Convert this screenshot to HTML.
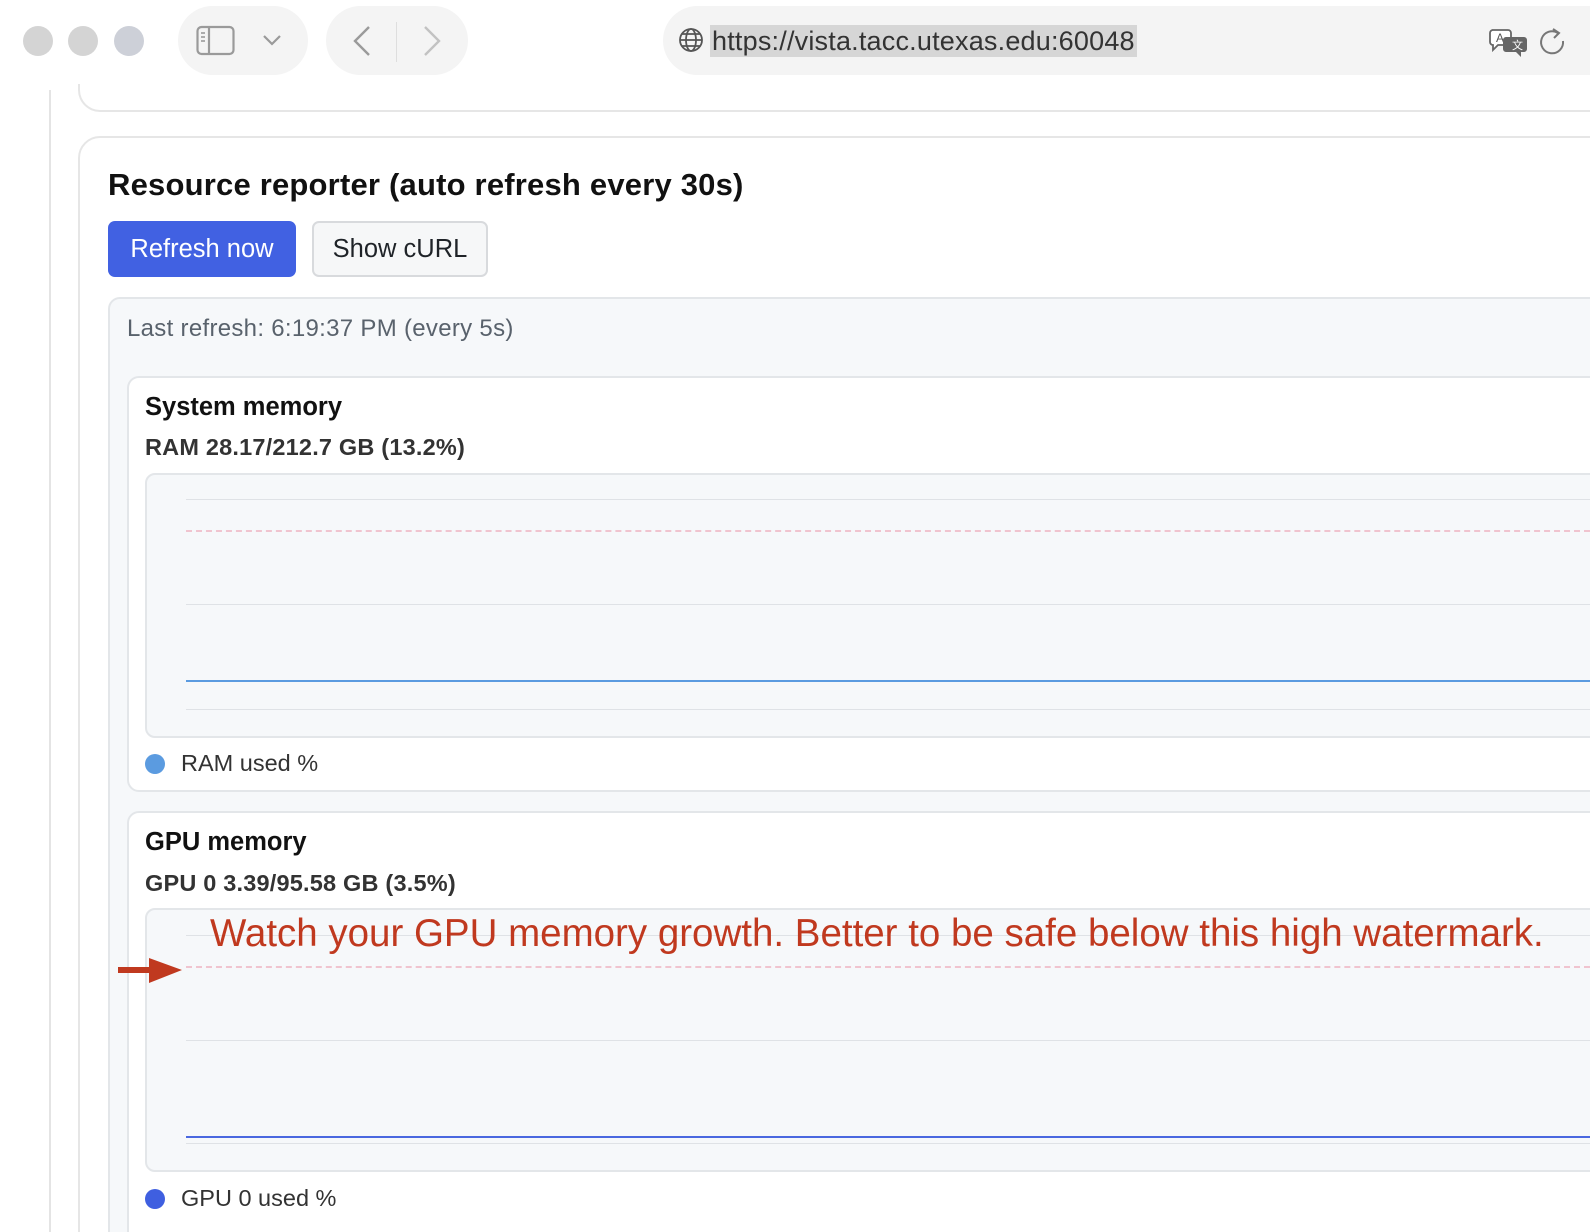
<!DOCTYPE html>
<html style="height:1232px;overflow:hidden"><head><meta charset="utf-8"><style>
*{margin:0;padding:0;box-sizing:border-box}
body{width:1590px;height:1232px;overflow:hidden;background:#fff;font-family:"Liberation Sans",sans-serif;position:relative;color:#1f2328}
#w{position:absolute;left:0;top:0;width:1590px;height:1232px;overflow:hidden}
.a{position:absolute}
.dot{position:absolute;width:30px;height:30px;border-radius:50%;background:#d4d4d4;top:26px}
.pill{position:absolute;background:#f4f4f4;border-radius:36px}
.gl{position:absolute;left:186px;right:0;height:1px;background:#dfe2e6}
.dash{position:absolute;left:186px;right:0;height:0;border-top:2px dashed #f0c4cf}
</style></head><body><div id="w">
<!-- page -->
<div class="a" style="left:49px;top:90px;width:2px;height:1142px;background:#e4e4e4"></div>
<div class="a" style="left:78px;top:60px;width:1600px;height:52px;border:2px solid #e6e6e6;border-top:none;border-radius:0 0 0 22px"></div>
<div class="a" style="left:78px;top:136px;width:1600px;height:1200px;border:2px solid #e6e6e6;border-radius:22px"></div>
<div class="a" style="left:108px;top:167px;font-size:31px;font-weight:bold;color:#111;letter-spacing:0.2px">Resource reporter (auto refresh every 30s)</div>
<div class="a" style="left:108px;top:221px;width:188px;height:56px;background:#4161e2;border-radius:7px;color:#fff;font-size:25.5px;line-height:56px;text-align:center">Refresh now</div>
<div class="a" style="left:312px;top:221px;width:176px;height:56px;background:#f6f7f8;border:2px solid #d8dadd;border-radius:7px;color:#1f2328;font-size:25.5px;line-height:52px;text-align:center">Show cURL</div>
<div class="a" style="left:108px;top:297px;width:1600px;height:1000px;background:#f6f8fa;border:2px solid #e3e6e9;border-radius:12px"></div>
<div class="a" style="left:127px;top:315px;font-size:24px;color:#59626c;letter-spacing:0.3px">Last refresh: 6:19:37 PM (every 5s)</div>
<!-- system -->
<div class="a" style="left:127px;top:376px;width:1600px;height:416px;background:#fff;border:2px solid #e3e6e9;border-radius:12px"></div>
<div class="a" style="left:145px;top:393px;font-size:25.5px;font-weight:bold;color:#111">System memory</div>
<div class="a" style="left:145px;top:434px;font-size:23.5px;font-weight:bold;color:#333;letter-spacing:0.2px">RAM 28.17/212.7 GB (13.2%)</div>
<div class="a" style="left:145px;top:473px;width:1600px;height:265px;background:#f6f8fa;border:2px solid #e3e6e9;border-radius:10px"></div>
<div class="gl" style="top:499px"></div>
<div class="dash" style="top:530px"></div>
<div class="gl" style="top:604px"></div>
<div class="a" style="left:186px;right:0;top:680px;height:2px;background:#5b9be0"></div>
<div class="gl" style="top:709px"></div>
<div class="a" style="left:145px;top:754px;width:20px;height:20px;border-radius:50%;background:#5b9be0"></div>
<div class="a" style="left:181px;top:750px;font-size:23.5px;color:#333">RAM used %</div>
<!-- gpu -->
<div class="a" style="left:127px;top:811px;width:1600px;height:500px;background:#fff;border:2px solid #e3e6e9;border-radius:12px"></div>
<div class="a" style="left:145px;top:828px;font-size:25.5px;font-weight:bold;color:#111">GPU memory</div>
<div class="a" style="left:145px;top:870px;font-size:23.5px;font-weight:bold;color:#333;letter-spacing:0.2px">GPU 0 3.39/95.58 GB (3.5%)</div>
<div class="a" style="left:145px;top:908px;width:1600px;height:264px;background:#f6f8fa;border:2px solid #e3e6e9;border-radius:10px"></div>
<div class="gl" style="top:935px"></div>
<div class="dash" style="top:966px"></div>
<div class="gl" style="top:1040px"></div>
<div class="a" style="left:186px;right:0;top:1136px;height:2px;background:#4a68e0"></div>
<div class="gl" style="top:1143px"></div>
<div class="a" style="left:145px;top:1189px;width:20px;height:20px;border-radius:50%;background:#3f5fe0"></div>
<div class="a" style="left:181px;top:1185px;font-size:23.5px;color:#333">GPU 0 used %</div>
<div class="a" style="left:210px;top:912px;font-size:38.5px;color:#c0391f;white-space:nowrap">Watch your GPU memory growth. Better to be safe below this high watermark.</div>
<svg class="a" style="left:116px;top:956px" width="68" height="30"><rect x="2" y="11" width="34" height="6" fill="#c0391f"/><path d="M33 2 L66 14 L33 27z" fill="#c0391f"/></svg>
<!-- toolbar -->
<div class="a" style="left:0;top:0;width:1590px;height:84px;background:#fff"></div>
<div class="dot" style="left:23px"></div>
<div class="dot" style="left:68px"></div>
<div class="dot" style="left:114px;background:#cdd0d8"></div>
<div class="pill" style="left:178px;top:6px;width:130px;height:69px"></div>
<svg class="a" style="left:196px;top:25px" width="40" height="32" viewBox="0 0 40 32"><rect x="1.5" y="2" width="36" height="27" rx="4" fill="none" stroke="#9a9a9a" stroke-width="2.2"/><line x1="13" y1="2" x2="13" y2="29" stroke="#9a9a9a" stroke-width="2.2"/><line x1="5" y1="8" x2="9" y2="8" stroke="#9a9a9a" stroke-width="1.6"/><line x1="5" y1="12" x2="9" y2="12" stroke="#9a9a9a" stroke-width="1.6"/><line x1="5" y1="16" x2="9" y2="16" stroke="#9a9a9a" stroke-width="1.6"/></svg>
<svg class="a" style="left:262px;top:34px" width="20" height="12"><path d="M2 2 L10 10 L18 2" fill="none" stroke="#9a9a9a" stroke-width="2.2"/></svg>
<div class="pill" style="left:326px;top:6px;width:142px;height:69px"></div>
<svg class="a" style="left:350px;top:24px" width="24" height="34"><path d="M19 3 L5 17 L19 31" fill="none" stroke="#9a9a9a" stroke-width="2.4"/></svg>
<div class="a" style="left:396px;top:22px;width:1px;height:40px;background:#dedede"></div>
<svg class="a" style="left:420px;top:24px" width="24" height="34"><path d="M5 3 L19 17 L5 31" fill="none" stroke="#c2c2c2" stroke-width="2.4"/></svg>
<div class="pill" style="left:663px;top:6px;width:960px;height:69px"></div>
<svg class="a" style="left:678px;top:27px" width="26" height="26" viewBox="0 0 26 26" fill="none" stroke="#555" stroke-width="1.8"><circle cx="13" cy="13" r="11"/><ellipse cx="13" cy="13" rx="5" ry="11"/><line x1="2" y1="13" x2="24" y2="13"/><line x1="4" y1="7" x2="22" y2="7"/><line x1="4" y1="19" x2="22" y2="19"/></svg>
<div class="a" style="left:710px;top:25px;height:32px;background:#d6d6d6;font-size:27px;line-height:32px;color:#333;padding:0 2px;letter-spacing:0.2px">https://vista.tacc.utexas.edu:60048</div>
<svg class="a" style="left:1488px;top:27px" width="42" height="30" viewBox="0 0 42 30"><path d="M4 3 h16 a3 3 0 0 1 3 3 v9 a3 3 0 0 1-3 3 h-10 l-5 5 v-5 a3 3 0 0 1-3-3 v-9 a3 3 0 0 1 3-3z" fill="#fff" stroke="#666" stroke-width="1.8"/><text x="8" y="15" font-size="12" fill="#555" font-family="Liberation Sans">A</text><path d="M18 10 h18 a3 3 0 0 1 3 3 v9 a3 3 0 0 1-3 3 h-3 v5 l-5-5 h-10 a3 3 0 0 1-3-3 v-9 a3 3 0 0 1 3-3z" fill="#666"/><text x="24" y="22" font-size="11" fill="#fff" font-family="Noto Sans CJK SC,sans-serif">文</text></svg>
<svg class="a" style="left:1538px;top:27px" width="30" height="30" viewBox="0 0 30 30"><path d="M20 6 A11 11 0 1 0 25 14" fill="none" stroke="#777" stroke-width="2"/><path d="M15 2 L21 6 L16 11" fill="none" stroke="#777" stroke-width="2"/></svg>
</div></body></html>
